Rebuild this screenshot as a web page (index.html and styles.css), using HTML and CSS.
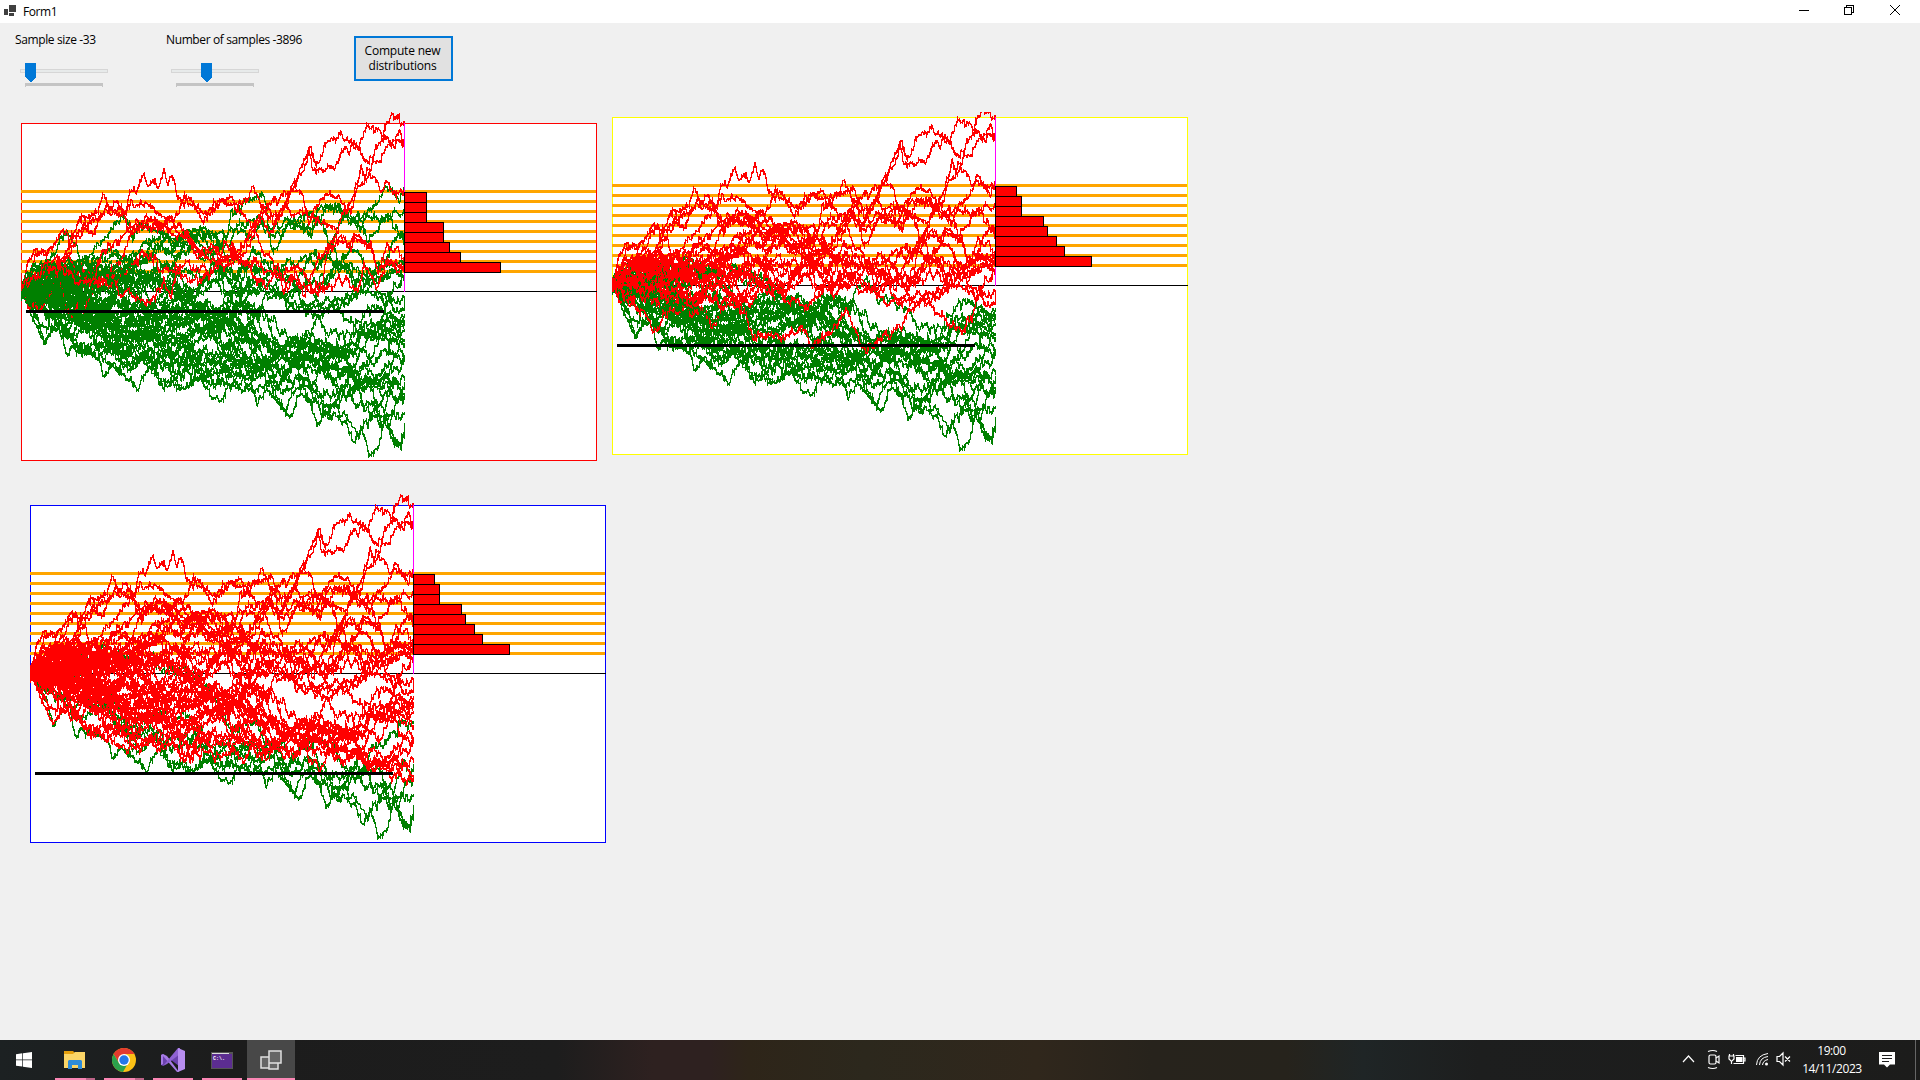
FILE: index.html
```html
<!DOCTYPE html>
<html lang="en">
<head>
<meta charset="utf-8">
<title>Form1</title>
<link rel="stylesheet" href="styles.css">
</head>
<body>
<header class="titlebar">
  <svg class="app-icon" width="14" height="14" shape-rendering="crispEdges"><path fill="#404040" d="M5 1h7v7H5zM0 5h4v6H0zM5 9h5v3H5z"/></svg>
  <span class="title">Form1</span>
  <svg class="window-buttons" width="120" height="23" fill="none" stroke="#000"><path shape-rendering="crispEdges" d="M9 10.500h10M54.500 7.500h7v7h-7zM56.500 7v-1.500h7v7h-2"/><path d="M100 5l10 10M110 5l-10 10"/></svg>
</header>
<main class="form">
  <section class="controls">
    <div class="field size">
      <label><span class="lbl">Sample size -33</span></label>
      <svg class="slider" width="90" height="26" shape-rendering="crispEdges"><path fill="#e7eaea" stroke="#d6d6d6" d="M.5 6.500h87v3h-87z"/><path fill="#c4c4c4" d="M5 20h78v4h-1v-1H6v1H5z"/><path fill="#0078d7" d="M5 0h11v14l-5 5h-1l-5-5z"/></svg>
    </div>
    <div class="field count">
      <label><span class="lbl">Number of samples -3896</span></label>
      <svg class="slider" width="90" height="26" shape-rendering="crispEdges"><path fill="#e7eaea" stroke="#d6d6d6" d="M.5 6.500h87v3h-87z"/><path fill="#c4c4c4" d="M5 20h78v4h-1v-1H6v1H5z"/><path fill="#0078d7" d="M30 0h11v14l-5 5h-1l-5-5z"/></svg>
    </div>
    <button class="compute">Compute new<br>distributions</button>
  </section>
  <section class="charts">
    <svg class="chart first" id="chart1" width="576" height="338"></svg>
    <svg class="chart second" id="chart2" width="576" height="338"></svg>
  </section>
  <section class="charts lower">
    <svg class="chart third" id="chart3" width="576" height="338"></svg>
  </section>
</main>
<footer class="taskbar">
  <div class="task start"><svg width="16" height="16" fill="#fff"><path d="M0 2.200l6.300-.9v6.200H0zM7 1.200L16 0v7.500H7zM0 8.300h6.300v6.300L0 13.700zM7 8.300h9V16l-9-1.300z"/></svg></div>
  <div class="task open multi"><svg width="22" height="18"><path fill="#e59f0c" d="M0 0h9l2 2v3H0z"/><path fill="#fbd567" d="M0 3h9l2-2h10v16H0z"/><path fill="#2e8bd8" d="M4 10l1-1h12l1 1v8h-4v-4H8v4H4z"/></svg></div>
  <div class="task open multi"><svg width="24" height="24" viewBox="0 0 24 24"><circle cx="12" cy="12" r="12" fill="#fbc116"/><path fill="#e33b2e" d="M1.600 6a12 12 0 0 1 20.800 0H12v7L7 15z"/><path fill="#2ba24c" d="M1.600 6L7 15l5 3 3-1-4 7A12 12 0 0 1 1.600 6z"/><circle cx="12" cy="12" r="6" fill="#fff"/><circle cx="12" cy="12" r="4.700" fill="#2577e8"/></svg></div>
  <div class="task open"><svg width="24" height="24" viewBox="0 0 24 24"><path fill="#6b42ae" d="M0 7l2-1 16 12V6L2 18l-2-1z"/><path fill="#a67be4" d="M0 7l2-1 4 2 12 16h-2L2 8v8l-2 1z"/><path fill="#8f62d3" d="M2 18L17 0h2v6L6 16z"/><path fill="#b78df0" d="M17 0l7 3v18l-7 3z"/></svg></div>
  <div class="task open"><svg width="22" height="17"><path fill="#555" d="M0 0h22v17H0z"/><path fill="#5c2d91" d="M1 2h20v14H1z"/><path fill="#ddd" d="M1 1h17v1H1z"/><text class="prompt" x="2" y="8">C:\.</text></svg></div>
  <div class="task open active"><svg width="22" height="21" fill="#656565" stroke="#e0e0e0" stroke-width="1.500"><path d="M1 7h8v11H1zM9 13h9v6H9zM9 1h12v12H9z"/></svg></div>
  <div class="tray">
    <svg width="116" height="24" fill="none" stroke="#fff" stroke-width="1.200">
      <path d="M3 14l5.500-6 5.500 6"/>
      <rect x="29" y="7" width="7" height="9" rx="1.500"/><path d="M36 10l3-2v7l-3-2M28 3.500q5-2 9 0M28 19.500q5 2 9 0"/>
      <path d="M55.500 7.500h8v8h-10M64 10h1v3h-1M49.500 6v2M53.500 6v2M49 8h5v3l-2 2h-1l-2-2zM51.500 13v3"/><path fill="#fff" stroke="none" d="M56 9h6.500v5H56z"/>
      <path stroke-width="1" d="M76.500 17Q77 7 88 5.500M79.500 17Q80 9.500 88 8.500M82.500 17Q83 12.500 88 11.500"/><circle cx="86.500" cy="16" r="1.500" fill="#fff" stroke="none"/>
      <path d="M97 8.500h2.500l3.500-3.500v12l-3.500-3.500H97zM105 8.500l5 5M110 8.500l-5 5"/>
    </svg>
    <div class="clock"><span class="time">19:00</span><span class="date">14/11/2023</span></div>
    <svg class="notice" width="16" height="16"><path fill="#fff" d="M0 0h16v12.500h-5l-3 3-3-3H0z"/><path stroke="#1e1e1e" d="M3 3.500h10M3 6.500h10M3 9.500h7"/></svg>
  </div>
</footer>
<script src="charts.js"></script>
</body>
</html>
```
FILE: styles.css
```css
* { box-sizing: border-box; }
body { margin: 0; width: 1920px; height: 1080px; display: flex; flex-direction: column; overflow: hidden; background: #f0f0f0; color: #000; font: 12px "Open Sans", "Noto Sans", sans-serif; }
.titlebar { height: 23px; flex: none; display: flex; background: #fff; }
.app-icon { margin: 4px 0 0 4px; }
.title { width: 120px; margin-left: 5px; line-height: 23px; font-size: 12px; letter-spacing: -.4px; }
.window-buttons { margin-left: auto; margin-right: 10px; }
.form { flex: 1; background: #f0f0f0; }
.controls { height: 94px; display: flex; }
.field { padding-top: 8px; }
.field label { display: block; height: 17px; line-height: 17px; white-space: nowrap; letter-spacing: -.38px; }
.slider { display: block; margin-top: 15px; }
.size { margin-left: 15px; width: 151px; }
.size .slider { margin-left: 5px; }
.count { width: 188px; }
.count .slider { margin-left: 5px; }
.compute { width: 99px; height: 45px; margin-top: 13px; padding: 0 2px 2px 0; border: 2px solid #0078d7; background: #e1e1e1; font: inherit; line-height: 15px; letter-spacing: -.2px; }
.charts { display: flex; padding-left: 21px; height: 388px; }
.chart { display: block; overflow: visible; shape-rendering: crispEdges; }
.first { margin-top: 6px; }
.second { margin-left: 15px; clip-path: inset(-5px 0 0 0); }
.lower { padding-left: 30px; }
.frame { fill: #fff; }
.level { fill: orange; }
.red { stroke: red; fill: none; }
.green { stroke: green; fill: none; }
.bar { fill: red; stroke: #000; }
.end { fill: magenta; }
.taskbar { height: 40px; flex: none; display: flex; background: linear-gradient(90deg, #1c2122 0, #1c1c1c 12%, #1d1d1d 29%, #2e2120 34%, #2e2120 37%, #2e2519 39%, #2c281d 45%, #30271c 54%, #27231c 60%, #26231c 67%, #1f2526 71%, #1d1e1e 77%, #1c1c1b); }
.task { width: 49px; height: 40px; display: flex; align-items: center; justify-content: center; }
.start { width: 50px; padding-right: 2px; }
.open { border-bottom: 2px solid #fa86b4; margin: 0 4px 0 5px; width: 40px; padding-top: 2px; }
.multi { border-image: linear-gradient(90deg, #fa86b4 78%, #bd6488 78%) 0 0 2 0; }
.active { width: 48px; margin: 0 0 0 1px; background: #484848; }
.prompt { font: bold 5px "Liberation Mono", monospace; fill: #fff; }
.tray { margin-left: auto; display: flex; color: #fff; position: relative; }
.tray > svg { margin-top: 8px; }
.clock { width: 76px; margin-left: -2px; padding-top: 2px; display: flex; flex-direction: column; align-items: center; line-height: 18px; letter-spacing: -.4px; }
.time { margin-right: 1px; }
.tray > .notice { margin: 12px 25px 0 9px; }
.tray::after { content: ""; position: absolute; right: 4px; top: 0; width: 1px; height: 40px; background: #666; }
```
FILE: charts.js
```js
// Every walk is listed as x,y control points on a 3x grid; group says which barriers it crosses.
// A: none, B: the first only, C: the first two, D: all three.
const WALKS = [
  ['A', '36,570 50,500 78,450 100,460 130,440 165,400 180,420 205,365 235,350 262,335 278,285 290,320 310,345 325,320 345,340 355,295 370,255 376,280 400,230 415,250 422,235 440,250 460,207 470,245 485,240 497,290 515,310 545,300 565,330 580,340 600,330 630,295 660,305 680,320 700,310 725,265 740,300 755,330 775,320 790,370 810,330 830,300 850,255 870,215 890,165 900,150 915,190 925,200 940,150 960,115 985,107 1010,125 1040,140 1060,170 1080,180 1095,200 1110,185 1125,150 1150,125 1165,100 1183,150'],
  ['A', '36,570 80,520 110,500 150,480 180,440 200,415 230,380 245,410 262,365 290,330 320,350 340,340 360,310 380,330 410,305 430,330 450,350 480,360 520,420 560,440 600,500 640,490 670,460 690,450 710,410 730,375 760,335 800,360 830,290 850,255 862,230 885,190 894,160 905,205 925,208 945,214 970,195 995,165 1020,145 1050,130 1065,90 1080,88 1115,108 1130,70 1145,50 1160,50 1170,70 1183,75'],
  ['A', '36,560 90,500 150,490 200,540 250,560 300,520 330,480 360,400 400,385 440,380 470,370 500,330 520,300 540,310 575,370 600,340 630,300 670,330 700,350 730,380 760,310 790,300 820,275 850,260 875,290 895,380 920,320 945,280 970,290 990,310 1010,340 1030,280 1050,200 1065,235 1075,220 1085,180 1095,150 1110,125 1130,130 1160,120 1170,130 1183,145'],
  ['A', '36,570 80,460 120,500 160,480 190,410 225,370 260,350 290,330 320,310 345,360 355,400 400,370 440,380 490,400 530,410 560,450 600,430 640,500 700,460 730,400 750,360 780,400 820,310 850,345 880,330 895,350 925,370 960,385 980,390 1000,340 1025,330 1040,260 1060,250 1070,210 1090,240 1110,285 1130,240 1145,290 1170,290 1183,280'],
  ['A', '36,560 90,510 150,500 200,560 250,530 290,440 320,420 350,400 400,380 430,375 460,360 490,380 520,390 560,440 600,450 640,480 680,470 720,500 760,540 800,500 830,540 870,500 900,520 920,480 960,440 990,420 1020,470 1040,420 1080,430 1100,490 1130,450 1150,470 1183,490'],
  ['A', '36,570 50,610 80,620 120,590 140,530 165,610 215,632 250,560 300,520 330,590 380,610 430,590 460,540 480,590 500,520 540,540 570,530 600,540 640,490 680,470 720,490 760,490 800,510 850,500 880,590 900,570 930,580 955,560 980,530 1010,560 1040,590 1060,500 1100,550 1130,480 1183,510'],
  ['A', '36,570 70,520 130,520 160,490 200,550 260,520 300,550 360,490 420,460 450,500 520,480 560,500 600,540 650,460 690,440 720,410 750,440 790,500 830,560 880,570 930,570 955,450 980,430 1020,440 1050,420 1080,430 1100,500 1183,480'],
  ['B', '36,570 100,520 150,420 170,395 190,430 210,490 240,460 270,430 300,390 340,350 355,370 365,420 380,390 410,380 450,400 490,430 530,400 560,380 600,400 650,410 660,350 690,325 720,300 755,280 765,320 775,400 785,450 800,430 830,360 870,370 900,380 930,315 980,325 1010,350 1040,370 1060,350 1090,320 1120,280 1150,280 1165,300 1183,245'],
  ['B', '36,570 90,580 150,500 200,540 250,480 300,460 350,480 400,440 450,390 500,420 540,430 600,400 650,420 690,350 720,340 760,370 820,400 870,350 900,350 930,395 960,430 1000,350 1040,380 1070,430 1100,410 1130,350 1165,390 1183,400'],
  ['B', '36,560 100,560 170,530 240,500 320,480 400,500 470,400 520,440 580,460 640,410 700,400 760,390 830,380 900,390 960,310 1000,345 1050,370 1100,360 1130,340 1160,325 1183,320'],
  ['B', '36,580 100,540 200,470 260,520 330,500 390,470 440,430 500,450 560,410 600,460 660,540 720,500 780,540 850,480 900,470 960,470 1010,500 1060,540 1110,500 1140,450 1183,440'],
  ['B', '36,570 80,590 150,560 220,510 290,560 350,540 420,540 470,520 520,510 580,550 640,520 710,540 780,560 850,600 890,570 940,520 990,490 1030,540 1080,530 1120,480 1183,490'],
  ['B', '36,570 80,550 150,600 220,580 290,490 350,560 400,560 440,500 500,500 560,430 600,440 660,480 720,460 790,500 850,550 900,490 960,500 1000,510 1050,550 1100,520 1183,530'],
  ['B', '36,570 70,540 150,550 210,600 280,620 350,600 420,630 500,520 540,560 600,520 650,500 700,560 760,590 820,600 890,560 940,600 990,570 1040,600 1090,590 1150,595 1183,620'],
  ['B', '36,565 80,600 160,560 210,650 300,610 360,560 420,620 490,550 550,590 620,540 700,600 740,540 800,590 870,620 920,630 960,600 980,640 1020,600 1060,530 1110,590 1140,600 1155,640 1183,655'],
  ['B', '36,570 70,610 130,650 160,690 220,610 260,660 330,690 380,660 440,690 500,720 560,730 610,700 630,750 680,710 730,650 770,730 810,750 860,720 900,680 920,640 960,600 1000,640 1050,680 1080,715 1110,680 1120,640 1150,560 1183,540'],
  ['B', '36,580 120,520 200,590 270,590 350,530 430,540 500,580 560,600 630,610 700,560 780,560 840,540 900,600 950,540 1000,460 1050,460 1100,540 1150,520 1183,500'],
  ['C', '36,570 90,540 150,600 230,500 270,490 310,560 400,530 430,550 500,590 550,610 620,640 690,640 740,620 790,580 830,620 880,640 920,630 945,680 975,680 1010,700 1050,640 1090,640 1130,660 1183,665'],
  ['C', '36,580 90,560 160,570 240,620 310,660 380,600 440,660 500,640 560,640 620,680 680,640 740,650 800,700 870,740 930,740 1000,740 1050,690 1100,680 1130,690 1183,680'],
  ['C', '36,580 100,600 170,590 240,650 300,680 370,660 430,720 490,650 550,680 610,680 660,710 720,690 780,720 840,760 900,730 980,740 1040,720 1100,700 1130,690 1183,700'],
  ['C', '36,570 100,580 180,640 240,690 310,720 380,730 440,690 500,670 560,650 640,660 710,680 770,760 830,740 900,780 960,770 1020,770 1060,700 1120,720 1183,690'],
  ['C', '36,580 110,610 180,680 250,680 320,720 390,670 450,740 520,740 590,750 650,730 720,760 780,770 850,770 920,790 980,790 1020,800 1060,730 1110,680 1140,760 1183,775'],
  ['C', '36,590 85,690 103,725 150,680 190,740 240,740 300,740 350,780 400,800 470,790 510,840 540,790 600,770 650,765 690,760 730,790 790,770 850,780 910,800 980,820 1050,850 1120,820 1183,810'],
  ['C', '36,570 140,640 200,650 260,650 320,700 380,710 440,760 510,700 580,720 640,680 720,700 790,740 860,730 920,790 990,770 1040,840 1090,860 1140,850 1183,850'],
  ['C', '36,560 90,590 160,620 250,640 330,580 400,700 480,760 560,760 620,770 690,760 750,800 800,740 870,790 920,760 970,820 1030,830 1080,870 1130,850 1150,780 1183,790'],
  ['C', '36,570 130,650 190,720 235,770 270,770 290,820 340,800 390,800 440,790 490,830 540,800 620,790 680,830 740,820 800,800 870,850 940,830 1000,840 1060,860 1120,890 1183,880'],
  ['C', '36,570 110,570 200,650 270,690 350,700 440,650 520,650 590,640 680,680 750,700 820,780 900,760 960,760 1020,750 1080,760 1110,720 1150,700 1183,720'],
  ['C', '36,570 110,610 160,590 240,650 300,680 380,690 440,700 520,710 600,660 660,690 730,720 800,800 860,780 920,740 1000,780 1050,800 1110,850 1150,840 1183,870'],
  ['C', '36,570 100,550 160,560 220,530 290,590 360,620 430,650 500,620 560,620 620,630 690,620 750,650 820,740 880,720 940,750 1010,730 1070,690 1130,670 1183,640'],
  ['D', '36,580 70,640 85,690 103,730 120,690 150,690 168,770 200,750 245,770 265,780 275,825 300,800 340,830 380,860 420,810 450,850 475,870 490,840 515,875 540,850 570,840 600,880 635,900 650,860 690,870 720,860 738,905 770,860 800,910 845,945 860,880 890,890 905,920 918,980 940,940 970,930 990,950 1010,975 1025,1030 1050,990 1075,1068 1105,1030 1120,960 1145,1000 1162,1030 1183,990'],
  ['D', '36,570 80,650 120,640 160,690 220,710 260,690 300,750 360,790 400,760 450,850 500,860 560,830 620,840 690,820 730,880 780,850 830,910 870,880 930,920 960,925 1000,930 1040,1000 1080,950 1130,970 1160,920 1183,900'],
  ['D', '36,580 100,600 180,600 260,680 340,760 400,730 450,800 500,790 540,730 570,830 620,850 700,790 750,790 810,860 870,830 920,890 960,930 1010,850 1030,920 1070,900 1100,950 1130,960 1160,1030 1183,980'],
  ['D', '36,570 100,590 180,530 250,485 290,520 380,540 430,560 480,590 540,600 590,640 640,740 700,720 750,790 800,840 860,770 920,880 990,860 1030,880 1070,850 1110,960 1150,930 1183,930'],
  ['D', '36,570 100,560 200,590 270,650 330,740 390,780 440,790 500,750 560,830 620,800 680,820 740,830 800,850 870,760 900,750 930,760 960,830 1020,860 1060,800 1100,770 1150,730 1183,735'],
  ['D', '36,570 110,640 190,640 270,690 350,730 420,690 490,700 570,780 640,840 700,840 780,780 850,830 890,840 940,930 980,920 1020,830 1060,940 1120,910 1150,830 1183,830']
];

const TOP = 70, LEFT = 33, END = 383;

function random(seed) {
  let s = seed * 7919 + 17;
  return () => { s = (s * 1664525 + 1013904223) >>> 0; return s / 4294967296; };
}

// keep: how long a deviation lasts; step: its size per column
function columns(points, seed, keep, step, end = END) {
  const rnd = random(seed);
  for (let i = 0; i < 20; i++) rnd();
  const p = points.split(' ').map(t => t.split(',').map(Number)).map(([x, y]) => [(x - LEFT) / 3, (y - TOP) / 3]);
  let k = 0, noise = 0, last = p[0][1], d = `M.5 ${Math.floor(last) - 3}v8`;
  for (let x = 1; x <= end; x++) {
    while (k < p.length - 2 && x > p[k + 1][0]) k++;
    const a = p[k], b = p[k + 1];
    const t = Math.min(1, (x - a[0]) / (b[0] - a[0]));
    noise = noise * keep + (rnd() + rnd() - 1) * step;
    const y = a[1] + (b[1] - a[1]) * t + noise + (rnd() - 0.5) * 2;
    const lo = Math.floor(Math.min(last, y) - rnd() * rnd() * rnd() * 5);
    const hi = Math.ceil(Math.max(last, y) + rnd() * rnd() * rnd() * 5);
    d += `M${x + 0.5} ${lo}V${hi}`;
    last = y;
  }
  return d;
}

const paths = [];
WALKS.forEach(([group, pts], i) => {
  const detailed = pts.length > 300;
  paths.push({ group, d: columns(pts, i + 1, detailed ? 0.65 : 0.88, detailed ? 4.4 : 6) });
  if (i > 9 && i < 29 && i !== 15 && i % 2 === 0) {
    paths.push({ group, d: columns(pts, i + 101, 0.95, 6, 130 + (i * 37) % 140) });
  }
});
// Short starting stretches, where the walks have not spread yet.
const STARTS = [['B', 510, 540, 500, 560], ['B', 530, 500, 520, 570], ['B', 600, 580, 550, 500], ['B', 540, 600, 620, 560],
  ['B', 560, 520, 590, 480], ['C', 590, 560, 610, 640], ['C', 610, 600, 580, 620], ['C', 550, 580, 570, 590],
  ['C', 530, 550, 530, 550], ['C', 580, 610, 640, 660], ['B', 520, 510, 540, 600], ['B', 570, 560, 520, 530]];
STARTS.forEach(([group, a, b, c, e], i) => {
  paths.push({ group, start: true, d: columns(`33,570 65,${a} 110,${b} 170,${c} 250,${e} 400,${e + 10}`, i + 201, 0.92, 5.6, 55 + (i * 29) % 60) });
});

function draw(id, border, redGroups, barrier, bars) {
  const isRed = w => redGroups.includes(w.group);
  const trace = w => `<path class="${isRed(w) ? 'red' : 'green'}" d="${w.d}"/>`;
  let s = `<rect class="frame" x=".5" y=".5" width="575" height="337" stroke="${border}"/>`;
  for (let i = 0; i < 9; i++) s += `<rect class="level" x="0" y="${67 + i * 10}" width="575" height="3"/>`;
  s += '<rect x="0" y="168" width="576" height="1"/>';
  s += paths.filter(w => !isRed(w) && !w.start).map(trace).join('');
  s += paths.filter((w, i) => isRed(w) && !w.start && i % 5 !== 4).map(trace).join('');
  s += paths.filter(w => w.start).map(trace).join('');
  s += paths.filter((w, i) => isRed(w) && !w.start && i % 5 === 4).map(trace).join('');
  s += `<rect x="5" y="${barrier}" width="358" height="3"/>`;
  s += '<rect class="end" x="383" y="0" width="1" height="169"/>';
  bars.forEach((w, i) => { s += `<rect class="bar" x="383.5" y="${69.5 + i * 10}" width="${w}" height="10"/>`; });
  document.getElementById(id).innerHTML = s;
}

draw('chart1', 'red', 'A', 187, [22, 22, 22, 39, 39, 45, 56, 96]);
draw('chart2', 'yellow', 'AB', 227, [21, 26, 26, 48, 52, 61, 69, 96]);
draw('chart3', 'blue', 'ABC', 267, [21, 26, 26, 48, 52, 61, 69, 96]);
```
